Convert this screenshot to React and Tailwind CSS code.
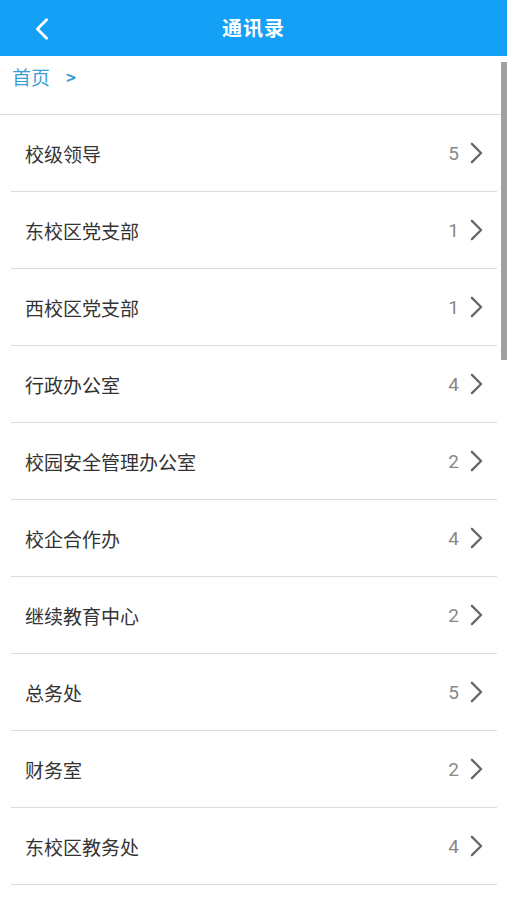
import React from 'react';

const groups = [
  { name: '校级领导', count: 5 },
  { name: '东校区党支部', count: 1 },
  { name: '西校区党支部', count: 1 },
  { name: '行政办公室', count: 4 },
  { name: '校园安全管理办公室', count: 2 },
  { name: '校企合作办', count: 4 },
  { name: '继续教育中心', count: 2 },
  { name: '总务处', count: 5 },
  { name: '财务室', count: 2 },
  { name: '东校区教务处', count: 4 },
];

function Chevron({ className, color = '#666', width = 2.5 }) {
  return (
    <svg viewBox="0 0 14 24" className={className} fill="none">
      <path d="M2 2 L12 12 L2 22" stroke={color} strokeWidth={width} strokeLinecap="round" strokeLinejoin="round" />
    </svg>
  );
}

export default function App() {
  return (
    <div
      className="relative h-screen overflow-hidden bg-white flex flex-col"
      style={{ fontFamily: '"Noto Sans CJK SC", "Noto Sans", sans-serif' }}
    >
      {/* Header */}
      <div className="h-[56px] shrink-0 bg-[#14a0f6] flex items-center relative">
        <svg viewBox="0 0 14 24" className="absolute left-[35px] top-[18px] w-[14px] h-[22px]" fill="none">
          <path d="M12 2 L2 12 L12 22" stroke="#fff" strokeWidth="3" strokeLinecap="round" strokeLinejoin="round" />
        </svg>
        <div className="flex-1 text-center text-white text-[20px] font-bold tracking-[1px]">通讯录</div>
      </div>

      {/* Breadcrumb */}
      <div className="h-[59px] shrink-0 flex items-center pl-[12px] pb-[16px] text-[19px] text-[#3b9fd6] border-b border-[#dcdcdc]">
        <span>首页</span>
        <span className="ml-[16px] font-bold text-[17px]">&gt;</span>
      </div>

      {/* List */}
      <div className="flex-1 pl-[11px] pr-[10px]">
        {groups.map(g => (
          <div key={g.name} className="h-[77px] flex items-center border-b border-[#dcdcdc]">
            <span className="pl-[14px] pt-[3px] text-[19px] text-[#333]">{g.name}</span>
            <span className="ml-auto pt-[3px] text-[19px] text-[#888]" style={{ fontFamily: 'Roboto, sans-serif' }}>{g.count}</span>
            <Chevron className="ml-[11px] mr-[14px] w-[13px] h-[22px]" />
          </div>
        ))}
      </div>

      {/* Scrollbar */}
      <div className="absolute right-0 top-[62px] w-[6px] h-[298px] bg-[#a0a0a0]" />
    </div>
  );
}
